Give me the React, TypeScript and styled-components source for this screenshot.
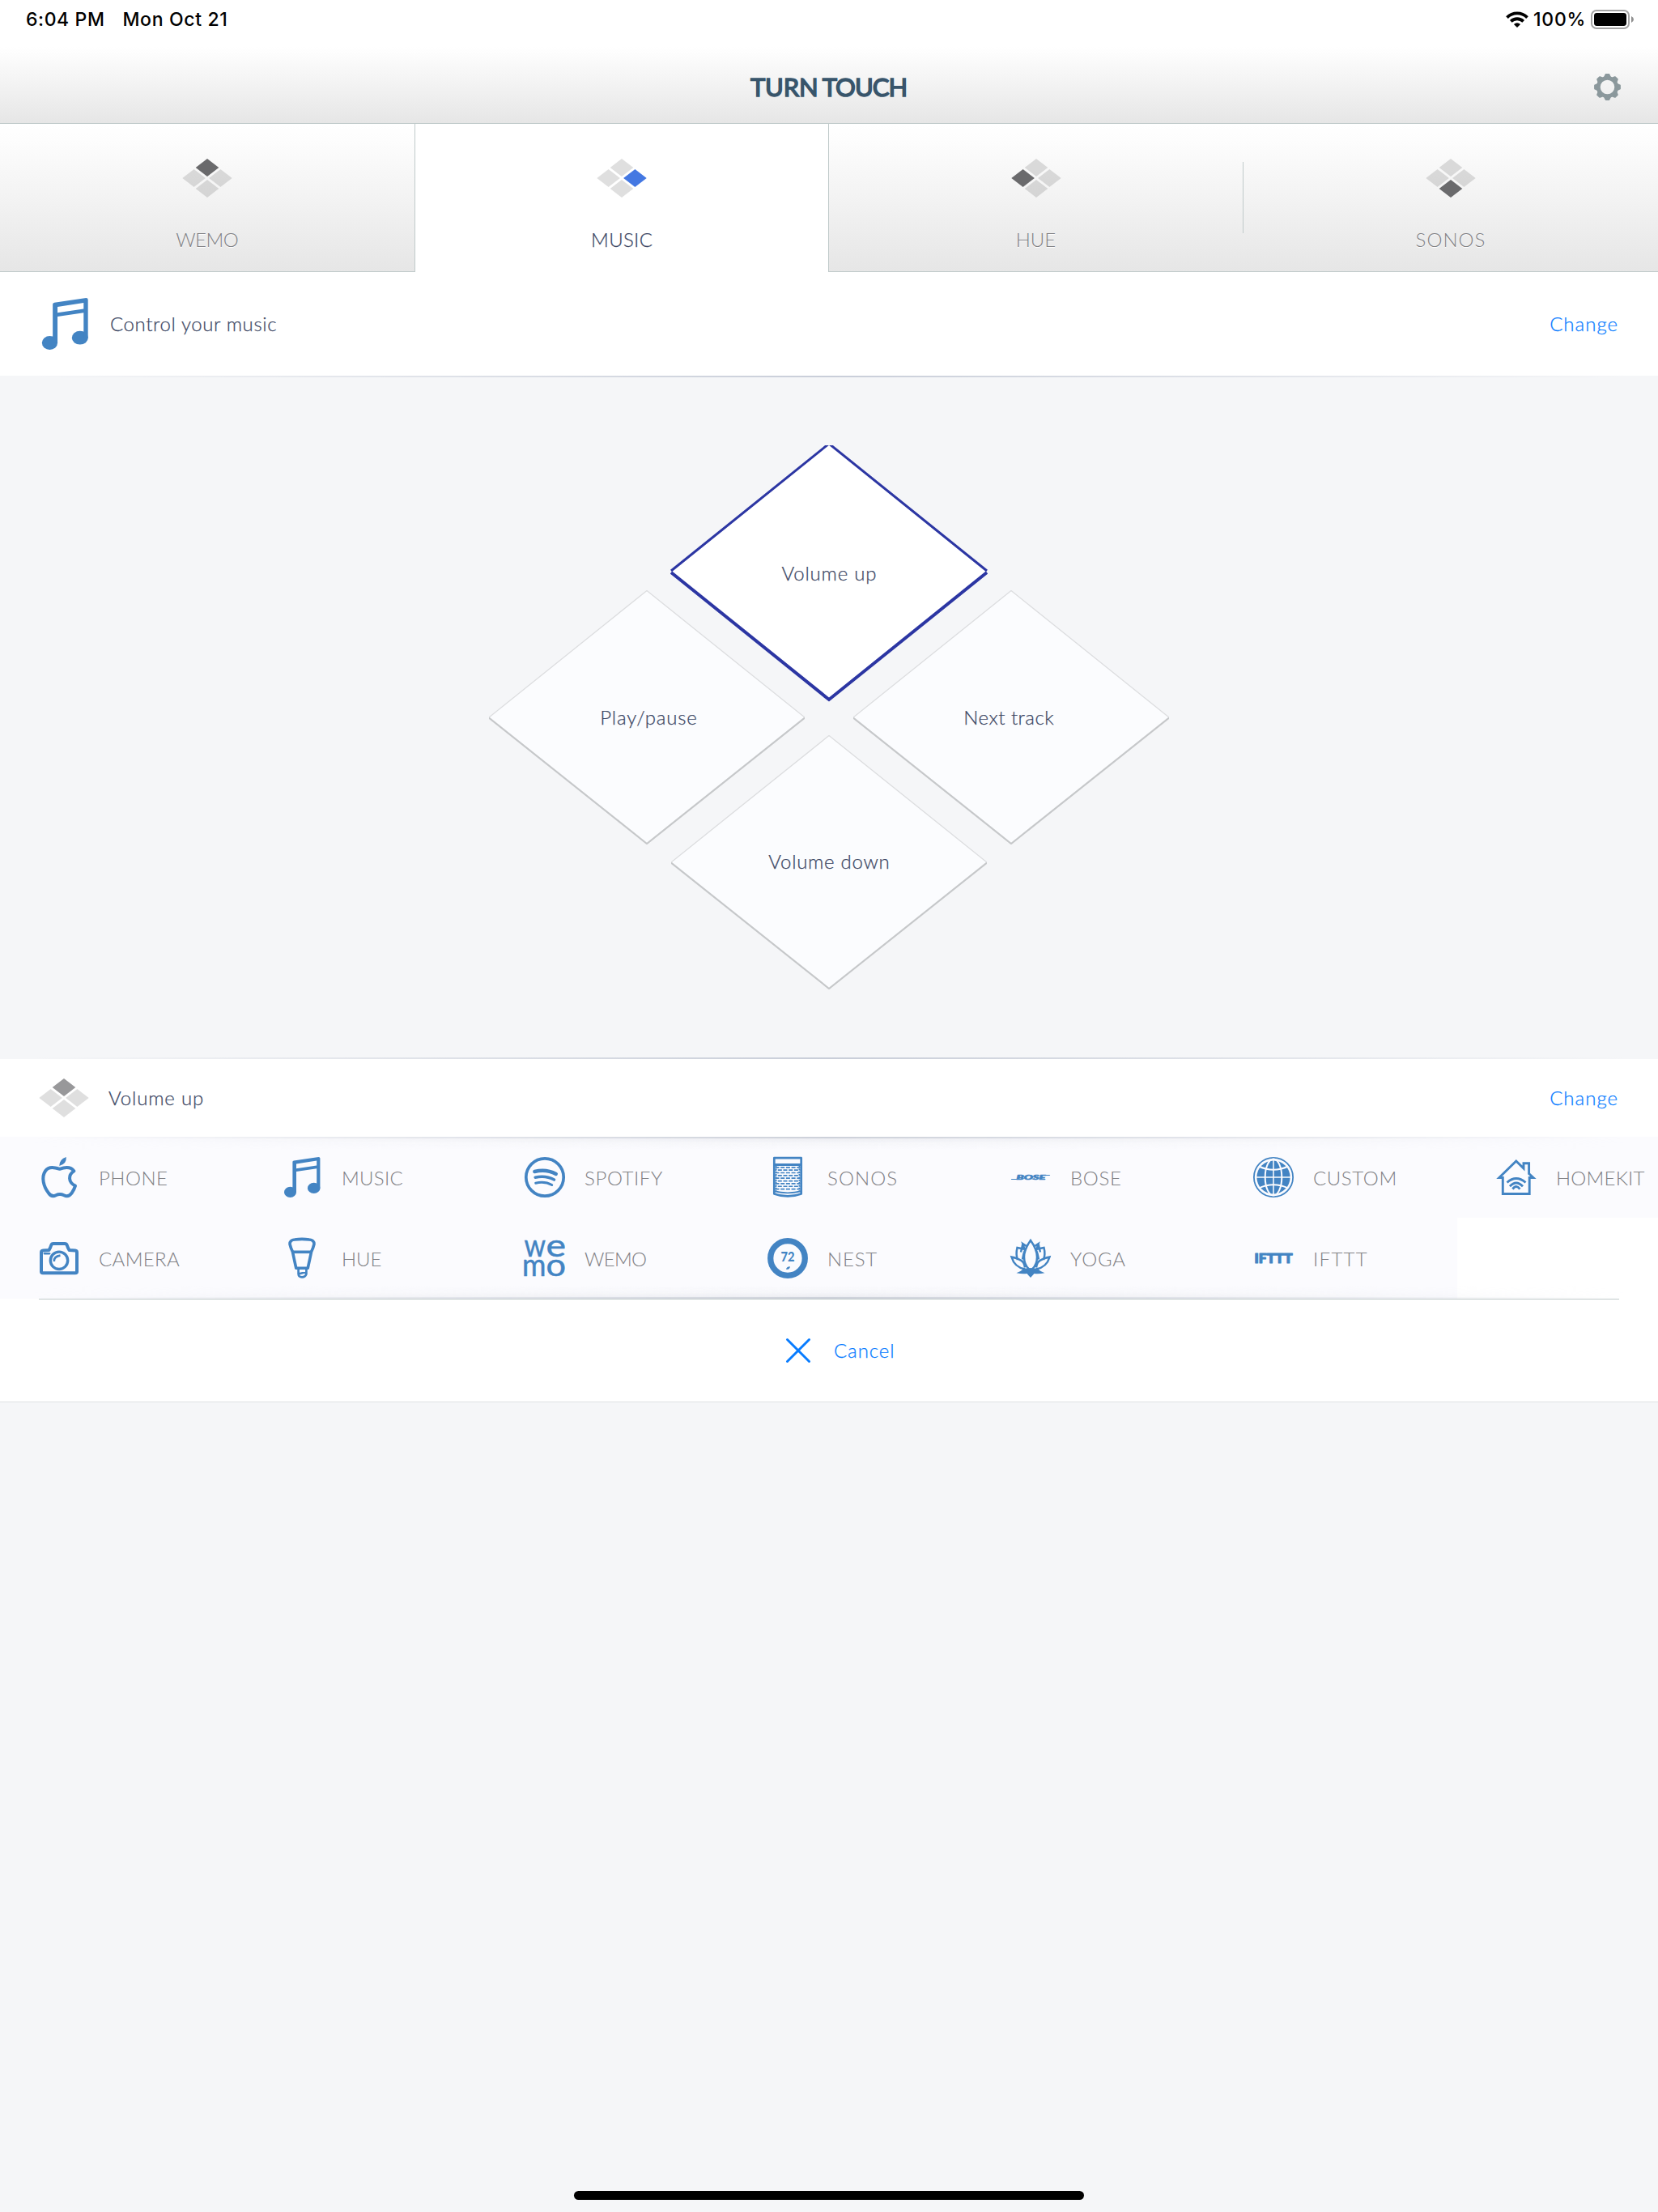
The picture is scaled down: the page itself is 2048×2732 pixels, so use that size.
import React from 'react';
import styled, { createGlobalStyle } from 'styled-components';

const BLUE = '#4384c3';
const LINE = '#c0caca';
const PAPER = '#fbfbfe';
const INK = '#3c4764';
const LINK = '#087cff';
const MUTED = '#808084';

const GlobalStyle = createGlobalStyle`
  html, body { margin: 0; padding: 0; background: #f5f6f8; }
  * { box-sizing: border-box; }
  svg { display: block; flex: none; }
`;

const Screen = styled.main`
  width: 2048px;
  height: 2732px;
  display: flex;
  flex-direction: column;
  background: #f5f6f8;
  font-family: Lato, 'Open Sans', sans-serif;
  font-weight: 300;
  font-size: 24px;
  line-height: 30px;
  overflow: hidden;
`;

const Label = styled.span<{ $track?: number; $tone?: string }>`
  white-space: nowrap;
  letter-spacing: ${p => p.$track ?? 0}px;
  margin-right: ${p => -(p.$track ?? 0)}px;
  color: ${p => p.$tone ?? INK};
  -webkit-text-stroke: ${p => (p.$tone === MUTED ? '0' : `0.25px ${p.$tone ?? INK}`)};
`;

/* ---------- status bar and navigation ---------- */

const Top = styled.header`
  height: 153px;
  flex: none;
  display: flex;
  flex-direction: column;
  border-bottom: 1px solid ${LINE};
  background: linear-gradient(#fff 0, #fff 58px, #f3f3f3 103px, #e6e6e6 152px);
`;

const StatusBar = styled.div`
  height: 48px;
  padding: 0 30px 0 32px;
  display: flex;
  justify-content: space-between;
  align-items: center;
  font-family: Inter, sans-serif;
  font-weight: 500;
  font-size: 23px;
  color: #000;
`;

const StatusGroup = styled.div<{ $gap: number }>`
  display: flex;
  align-items: center;
  gap: ${p => p.$gap}px;
  white-space: nowrap;
`;

const StatusText = styled.span<{ $track: number }>`
  letter-spacing: ${p => p.$track}px;
`;

const NavBar = styled.div`
  flex: 1;
  display: grid;
  grid-template-columns: 1fr auto 1fr;
  align-items: start;
  padding: 0 46px 0 46px;
`;

const Brand = styled.h1`
  grid-column: 2;
  margin: 39px 0 0;
  display: flex;
  gap: 5px;
  font-size: 31px;
  line-height: 40px;
  font-weight: 400;
  color: #38556b;
  -webkit-text-stroke: 1.5px #38556b;
  stroke-linejoin: round;
`;

const BrandWord = styled.span<{ $track: number }>`
  letter-spacing: ${p => p.$track}px;
  margin-right: ${p => -p.$track}px;
`;

const GearButton = styled.button`
  justify-self: end;
  margin: 43px 0 0;
  padding: 0;
  border: 0;
  background: none;
`;

/* ---------- tabs ---------- */

const Tabs = styled.nav`
  flex: none;
  height: 183px;
  display: grid;
  grid-template-columns: 513px 510px 512px 513px;
`;

const Tab = styled.div<{ $active?: boolean; $edge?: 'left' | 'right' }>`
  display: flex;
  flex-direction: column;
  align-items: center;
  padding-top: 43px;
  gap: 37px;
  background: ${p => (p.$active ? '#fff' : 'linear-gradient(#fff 0, #fdfdfd 20px, #e6e6e6 100%)')};
  border-bottom: 1px solid ${p => (p.$active ? '#fff' : LINE)};
  border-left: ${p => (p.$edge === 'left' ? `1px solid ${LINE}` : '0')};
  border-right: ${p => (p.$edge === 'right' ? `1px solid ${LINE}` : '0')};
  text-shadow: ${p => (p.$active ? 'none' : '0 1px 0 #fff')};
`;

const TabSplit = styled(Tab)`
  position: relative;
  &::before {
    content: '';
    position: absolute;
    left: 0;
    top: 47px;
    width: 1px;
    height: 88px;
    background: ${LINE};
  }
`;

/* ---------- rows ---------- */

const FadeLine = styled.div`
  flex: none;
  height: 2px;
  background: linear-gradient(90deg, rgba(201, 206, 217, 0) 2%, #c9ced9 50%, rgba(201, 206, 217, 0) 98%);
`;

const Row = styled.section<{ $h: number; $gap: number }>`
  flex: none;
  height: ${p => p.$h}px;
  padding: 0 50px 0 48px;
  display: flex;
  align-items: center;
  gap: ${p => p.$gap}px;
  background: #fff;
`;

const Spacer = styled.div`
  flex: 1;
`;

/* ---------- direction pad ---------- */

const Stage = styled.section`
  flex: none;
  height: 840px;
  display: flex;
  justify-content: center;
  align-items: flex-start;
  padding-top: 84px;
`;

const Pad = styled.div`
  width: 840px;
  height: 672px;
  display: grid;
`;

const PadKey = styled.div<{ $x: string; $y: string }>`
  grid-area: 1 / 1;
  justify-self: ${p => p.$x};
  align-self: ${p => p.$y};
  display: grid;
  place-items: center;
  > * { grid-area: 1 / 1; }
`;

const PadLabel = styled(Label)<{ $dx: number; $dy: number }>`
  transform: translate(${p => p.$dx}px, ${p => p.$dy}px);
`;

/* ---------- app grid ---------- */

const AppGrid = styled.section`
  flex: none;
  position: relative;
  height: 200px;
  overflow: hidden;
  display: grid;
  grid-template-columns: repeat(7, 300px);
  grid-auto-rows: 100px;
  background: #fff;
`;

const Edge = styled.div<{ $side: 'top' | 'bottom' }>`
  position: absolute;
  left: 0;
  right: 0;
  ${p => p.$side}: 0;
  height: 16px;
  background: linear-gradient(
    ${p => (p.$side === 'top' ? '180deg' : '0deg')},
    #cdd1da 0, #cdd1da 2px, rgba(232, 233, 238, 0.8) 2px, rgba(241, 242, 246, 0.5) 8px, rgba(251, 251, 254, 0) 16px
  );
  mask-image: linear-gradient(90deg, transparent 2%, #000 50%, transparent 98%);
`;

const AppCell = styled.div`
  display: flex;
  align-items: center;
  gap: 24px;
  padding-left: 48px;
  background: ${PAPER};
`;

const AppName = styled(Label)`
  padding-top: 2px;
`;

const Cancel = styled.section`
  flex: none;
  height: 128px;
  display: flex;
  justify-content: center;
  background: #fff;
  border-bottom: 1px solid #dfe1e3;
`;

const CancelInner = styled.div`
  width: 1952px;
  border-top: 1px solid ${LINE};
  display: flex;
  align-items: center;
  gap: 28px;
  padding: 0 0 0 922px;
`;

const HomeBar = styled.div`
  width: 630px;
  height: 11px;
  border-radius: 6px;
  background: #000;
  margin: auto auto 15px;
`;

/* ---------- drawings ---------- */

type Spot = 'top' | 'left' | 'right' | 'bottom';

function Diamonds({ on, tint }: { on: Spot; tint: string }) {
  const centers: [Spot, number, number][] = [
    ['top', 31, 11], ['left', 14.6, 24], ['right', 47.4, 24], ['bottom', 31, 37],
  ];
  return (
    <svg width="62" height="48" viewBox="0 0 62 48">
      {centers.map(([k, x, y]) => (
        <path key={k} d={`M${x - 14.3} ${y}L${x} ${y - 11}L${x + 14.3} ${y}L${x} ${y + 11}Z`}
          fill={k === on ? tint : '#000'} fillOpacity={k === on ? 1 : 0.125} />
      ))}
    </svg>
  );
}

function Gear() {
  const teeth = Array.from({ length: 8 }, (_, i) => i * 45);
  return (
    <svg width="33" height="33" viewBox="-16.5 -16.5 33 33" fill="#8b989c">
      <circle r="11.2" fill="none" stroke="#8b989c" strokeWidth="4.8" />
      {teeth.map(a => (
        <path key={a} transform={`rotate(${a})`} d="M-4.4 -12.4L-3 -15.6Q-2.8 -16.4 -2 -16.4H2Q2.8 -16.4 3 -15.6L4.4 -12.4Z" />
      ))}
    </svg>
  );
}

function Wifi() {
  return (
    <svg width="28" height="20" viewBox="0 0 28 20" fill="none" stroke="#000" strokeWidth="3.8">
      <path d="M1.5 7.6A17.6 17.6 0 0 1 26.5 7.6" />
      <path d="M6.3 12.4A11 11 0 0 1 21.7 12.4" />
      <path d="M14 20L9.9 15.9Q14 12.6 18.1 15.9Z" fill="#000" stroke="none" />
    </svg>
  );
}

function Battery() {
  return (
    <svg width="53" height="24" viewBox="0 0 53 24">
      <rect x="1" y="1" width="46" height="22" rx="6" fill="none" stroke="#a3a3a3" strokeWidth="2" />
      <rect x="4" y="4" width="40" height="16" rx="3.4" />
      <path d="M50 8Q53 9.4 53 12T50 16Z" fill="#8f8f8f" />
    </svg>
  );
}

function KeyShape({ active }: { active?: boolean }) {
  if (active) {
    return (
      <svg width="392" height="317" viewBox="0 0 392 317" fill="none" stroke="#2c36a3">
        <path d="M1 156L196 -1L391 156L196 314Z" fill="#fff" stroke="none" />
        <path d="M1 155L196 -2L391 155" strokeWidth="3" />
        <path d="M1 157L196 314L391 157" strokeWidth="4" />
      </svg>
    );
  }
  return (
    <svg width="390" height="314" viewBox="0 0 390 314" fill="none">
      <path d="M0 157L195 .5L390 157L195 313Z" fill="#fbfcfe" />
      <path d="M0 157L195 .5L390 157" stroke="#dcdddf" strokeWidth="1.3" />
      <path d="M0 157.5L195 313L390 157.5" stroke="#c6c8ca" strokeWidth="2.2" />
    </svg>
  );
}

function Icon({ size = 50, children }: { size?: number; children: React.ReactNode }) {
  return (
    <svg width={size} height={size} viewBox="0 0 50 50" fill="none" stroke={BLUE} strokeWidth="3.6"
      strokeLinejoin="round" fontFamily="Lato, sans-serif" overflow="visible">
      {children}
    </svg>
  );
}

function Music({ size }: { size?: number }) {
  return (
    <Icon size={size}>
      <g fill={BLUE} stroke="none">
        <ellipse cx="10.5" cy="43.4" rx="7.5" ry="6.6" />
        <ellipse cx="39.7" cy="38.4" rx="7.8" ry="6.6" />
        <path d="M13.4 43V6Q13.4 4.6 15 4.4L45.6 0Q47.4 0 47.4 1.6V38.4H43.2V14.3L18 18V43.4ZM18 14.3L43.2 10.6V4.6L18 8.6Z" fillRule="evenodd" />
      </g>
    </Icon>
  );
}

function Apple() {
  return (
    <Icon>
      <path d="M25.7 14.8C20 13 12.5 10.8 8.2 17C2.5 25 6 37 12 44.5C15 48.8 18.5 48.6 21 47.2C24.5 45.5 27.5 45.5 31 47.2C34.5 49 38 48 40.4 44.8C42.7 41.5 44 39 45 35.6C36 31 36 22 43.4 17.4C39 11 31 13 25.7 14.8Z" strokeWidth="4" />
      <path d="M25.3 11Q25 3 33.8 0Q34.5 8.6 25.3 11Z" fill={BLUE} stroke="none" />
    </Icon>
  );
}

function Camera() {
  return (
    <Icon>
      <path d="M3 41.5V18Q3 15.8 5.2 15.6L12.5 15Q14.3 12 15.2 9Q15.8 7 18 7H32Q34 7 34.8 9Q35.7 12 37.5 15L45 15.6Q47 15.8 47 18V41.5Q47 43.3 45 43.3H5Q3 43.3 3 41.5Z" strokeWidth="4" />
      <circle cx="25" cy="27.8" r="10.7" strokeWidth="3.4" />
      <path d="M18.8 29Q18.5 22.5 26.5 21.6" strokeWidth="2.6" />
      <path d="M7 19.2H13" strokeWidth="2.6" strokeLinecap="round" />
    </Icon>
  );
}

function Bulb() {
  return (
    <Icon>
      <path d="M10 7.5Q10 2.5 16 2Q25 .8 34 2Q40 2.5 40 7.5Q39 12 36.5 17.3Q34.5 27 32.2 37.3H17.8Q15.5 27 13.5 17.3Q11 12 10 7.5Z" />
      <path d="M13.5 17.3H36.5" />
      <path d="M20.6 38V44.5Q20.8 48.3 25 48.3T30.4 44.5V38M20.6 44.5L30.4 42" strokeWidth="2.7" />
    </Icon>
  );
}

function Spotify() {
  return (
    <Icon>
      <circle cx="25" cy="25" r="23.2" strokeWidth="3.7" />
      <g strokeLinecap="round">
        <path d="M12.3 18Q27 14.5 38.8 21" strokeWidth="4.4" />
        <path d="M13.2 25.2Q26 22.3 36.5 28" strokeWidth="3.6" />
        <path d="M13.7 32.2Q25 29.7 33.7 34.5" strokeWidth="3" />
      </g>
    </Icon>
  );
}

function Speaker() {
  const rows = Array.from({ length: 9 }, (_, i) => 12.8 + i * 3.35);
  return (
    <Icon>
      <path d="M8.3 1.2H41.7V45.4Q25 51.5 8.3 45.4Z" strokeWidth="2.7" />
      <path d="M8 9.5H42" strokeWidth="2.8" />
      {rows.map((y, i) => (
        <path key={y} d={`M9.5 ${y}H40.5`} strokeWidth="1.7" strokeDasharray="5 1.7" strokeDashoffset={i % 2 ? 3.4 : 0} />
      ))}
      <path d="M10.6 11V43M39.4 11V43" strokeWidth="1.8" strokeDasharray="2 1.35" />
      <path d="M8 42.2Q25 46.5 42 42.2" strokeWidth="1.8" />
    </Icon>
  );
}

function Wemo() {
  return (
    <Icon>
      <g fill={BLUE} strokeWidth=".5" fontSize="39" fontWeight="400">
        <text x="-.5" y="23" textLength="26.5" lengthAdjust="spacingAndGlyphs">w</text>
        <text x="26.5" y="23" textLength="24.5" lengthAdjust="spacingAndGlyphs">e</text>
        <text x="-3" y="46.8" textLength="29.4" lengthAdjust="spacingAndGlyphs">m</text>
        <text x="26.5" y="46.8" textLength="24.5" lengthAdjust="spacingAndGlyphs">o</text>
      </g>
    </Icon>
  );
}

function Nest() {
  return (
    <Icon>
      <circle cx="25" cy="25" r="21.3" strokeWidth="7.3" />
      <text x="16.4" y="28.7" fontSize="17.5" fontWeight="900" textLength="17" lengthAdjust="spacingAndGlyphs" fill={BLUE} stroke="none">72</text>
      <path d="M23 38.8Q23.2 35.6 28 35.2Q27.6 39 23 38.8Z" fill={BLUE} stroke="none" />
    </Icon>
  );
}

function Bose() {
  return (
    <Icon>
      <g fill={BLUE} stroke="none">
        <text x="7.5" y="28" fontSize="8.3" fontWeight="900" fontStyle="italic" textLength="36" lengthAdjust="spacingAndGlyphs" stroke={BLUE} strokeWidth=".7">BOSE</text>
        <path d="M1.4 26.9H9L8.4 28H.8ZM41 22H49.2L48.6 23.1H40.4Z" />
      </g>
    </Icon>
  );
}

function Globe() {
  return (
    <Icon>
      <circle cx="25" cy="25" r="24.1" strokeWidth="1.8" />
      <circle cx="25" cy="25" r="20.6" fill={BLUE} stroke="none" />
      <g stroke={PAPER} strokeWidth="2">
        <path d="M25 3V47M3 25H47" strokeWidth="1.5" />
        <ellipse cx="25" cy="25" rx="10.3" ry="22.5" />
        <path d="M7 11.5Q25 20 43 11.5M7 38.5Q25 30 43 38.5" />
      </g>
    </Icon>
  );
}

function Lotus() {
  const half = (
    <>
      <path d="M17.5 14L15.4 7.2L19.8 10M13 17.5Q14.5 12 15.2 8" />
      <path d="M15 26.5Q16 19 18.5 14L8.5 12Q6.5 20 9 27" />
      <path d="M18 36.5Q17 29.5 13.5 28Q9 25 1.5 23.5Q5 36 18 38.5" />
    </>
  );
  return (
    <Icon>
      <g strokeWidth="2.5" strokeLinejoin="miter">
        <path d="M25 3Q17 14 17 23.5Q17 33 23 38.5H27Q33 33 33 23.5Q33 14 25 3Z" />
        {half}
        <g transform="matrix(-1 0 0 1 50 0)">{half}</g>
      </g>
      <path d="M17 37.6H33Q37 41.5 42.5 43.3Q35 44.8 29.5 44L25 49L20.5 44Q15 44.8 7.5 43.3Q13 41.5 17 37.6Z" fill={BLUE} stroke="none" />
    </Icon>
  );
}

function Ifttt() {
  return (
    <Icon>
      <text x="1.5" y="31" fontSize="16.7" fontWeight="900" textLength="47" lengthAdjust="spacingAndGlyphs" fill={BLUE} strokeWidth="1.2">IFTTT</text>
    </Icon>
  );
}

function House() {
  return (
    <Icon>
      <g strokeWidth="2.9" strokeLinejoin="miter">
        <path d="M8.3 25.5H3.8L24.8 5L34 14V7.8H40.6V20.5L46 25.5H41.2V45.5H8.3Z" />
        <path d="M13.5 31.5Q24.8 21.5 36.5 31.5" />
        <path d="M17 36.3Q24.8 27.8 33 36.3" />
        <path d="M20.5 39.6Q24.8 33.5 29.4 39.6" />
      </g>
    </Icon>
  );
}

/* ---------- data ---------- */

const APPS: { name: string; track: number; icon: React.ReactNode }[] = [
  { name: 'PHONE', track: 0.5, icon: <Apple /> },
  { name: 'MUSIC', track: 0.3, icon: <Music /> },
  { name: 'SPOTIFY', track: 0.6, icon: <Spotify /> },
  { name: 'SONOS', track: 1.1, icon: <Speaker /> },
  { name: 'BOSE', track: 0.7, icon: <Bose /> },
  { name: 'CUSTOM', track: 0.6, icon: <Globe /> },
  { name: 'HOMEKIT', track: 0.2, icon: <House /> },
  { name: 'CAMERA', track: 0.35, icon: <Camera /> },
  { name: 'HUE', track: 0, icon: <Bulb /> },
  { name: 'WEMO', track: -0.7, icon: <Wemo /> },
  { name: 'NEST', track: 0.8, icon: <Nest /> },
  { name: 'YOGA', track: 0.7, icon: <Lotus /> },
  { name: 'IFTTT', track: 1.3, icon: <Ifttt /> },
];

export default function App() {
  return (
    <Screen>
      <GlobalStyle />
      <Top>
        <StatusBar>
          <StatusGroup $gap={22}>
            <StatusText $track={0.6}>6:04 PM</StatusText>
            <StatusText $track={0.65}>Mon Oct 21</StatusText>
          </StatusGroup>
          <StatusGroup $gap={6}>
            <Wifi />
            <StatusText $track={0.7}>100%</StatusText>
            <Battery />
          </StatusGroup>
        </StatusBar>
        <NavBar>
          <Brand>
            <BrandWord $track={-0.1}>TURN</BrandWord>
            <BrandWord $track={-1}>TOUCH</BrandWord>
          </Brand>
          <GearButton aria-label="Settings"><Gear /></GearButton>
        </NavBar>
      </Top>

      <Tabs>
        <Tab $edge="right">
          <Diamonds on="top" tint="#6a6a6c" />
          <Label $tone={MUTED} $track={-0.5}>WEMO</Label>
        </Tab>
        <Tab $active>
          <Diamonds on="right" tint="#4478e2" />
          <Label $track={0.3}>MUSIC</Label>
        </Tab>
        <Tab $edge="left">
          <Diamonds on="left" tint="#6a6a6c" />
          <Label $tone={MUTED}>HUE</Label>
        </Tab>
        <TabSplit>
          <Diamonds on="bottom" tint="#6a6a6c" />
          <Label $tone={MUTED} $track={1}>SONOS</Label>
        </TabSplit>
      </Tabs>

      <Row $h={128} $gap={24}>
        <Music size={64} />
        <Label $track={0.6}>Control your music</Label>
        <Spacer />
        <Label $tone={LINK} $track={1}>Change</Label>
      </Row>
      <FadeLine />

      <Stage>
        <Pad>
          <PadKey $x="center" $y="start">
            <KeyShape active />
            <PadLabel $dx={0} $dy={-1} $track={0.8}>Volume up</PadLabel>
          </PadKey>
          <PadKey $x="start" $y="center">
            <KeyShape />
            <PadLabel $dx={2} $dy={0} $track={0.8}>Play/pause</PadLabel>
          </PadKey>
          <PadKey $x="end" $y="center">
            <KeyShape />
            <PadLabel $dx={-3} $dy={0} $track={0.5}>Next track</PadLabel>
          </PadKey>
          <PadKey $x="center" $y="end">
            <KeyShape />
            <PadLabel $dx={0} $dy={-1} $track={0.7}>Volume down</PadLabel>
          </PadKey>
        </Pad>
      </Stage>

      <FadeLine />
      <Row $h={96} $gap={24}>
        <Diamonds on="top" tint="#98989a" />
        <Label $track={0.8}>Volume up</Label>
        <Spacer />
        <Label $tone={LINK} $track={1}>Change</Label>
      </Row>

      <AppGrid>
        {APPS.map(a => (
          <AppCell key={a.name}>
            {a.icon}
            <AppName $track={a.track} $tone={MUTED}>{a.name}</AppName>
          </AppCell>
        ))}
        <Edge $side="top" />
        <Edge $side="bottom" />
      </AppGrid>

      <Cancel>
        <CancelInner>
          <svg width="32" height="32" viewBox="0 0 32 32" stroke="#087cff" strokeWidth="3" strokeLinecap="round">
            <path d="M2.5 2.5L29.5 29.5M29.5 2.5L2.5 29.5" />
          </svg>
          <Label $tone={LINK} $track={0.9}>Cancel</Label>
        </CancelInner>
      </Cancel>

      <HomeBar />
    </Screen>
  );
}
